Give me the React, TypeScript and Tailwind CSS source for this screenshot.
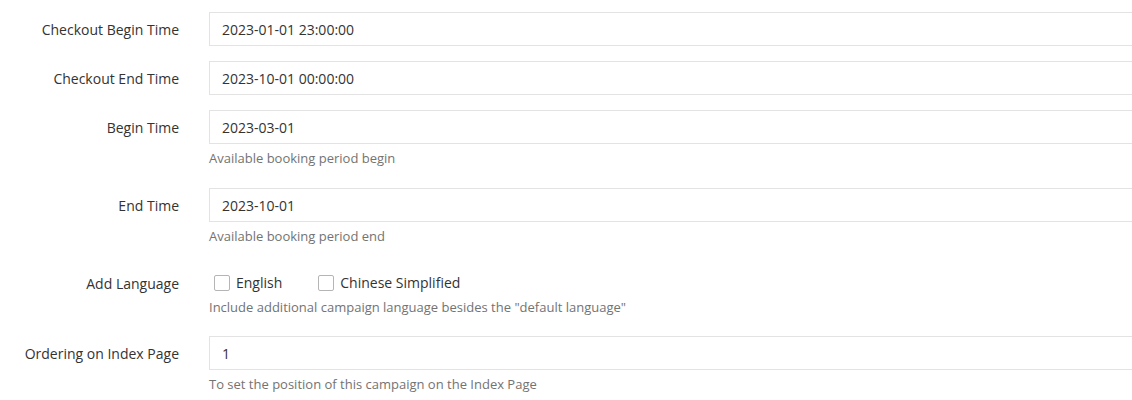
import React from "react";

const font = { fontFamily: '"Open Sans", "Noto Sans", sans-serif' };

function Row({
  label,
  children,
  help,
  mb,
}: {
  label: string;
  children: React.ReactNode;
  help?: string;
  mb?: string;
}) {
  return (
    <div className={`flex ${mb ?? (help ? "mb-[22px]" : "mb-[15px]")}`}>
      <div className="w-[194px] shrink-0 pr-[15px] pt-[8px] text-right text-[14px] leading-[20px] text-[#333333]">
        {label}
      </div>
      <div className="flex-1 pl-[15px]">
        {children}
        {help && (
          <div className="mt-[5px] pt-[1px] text-[13px] leading-[17px] text-[#737373]">{help}</div>
        )}
      </div>
    </div>
  );
}

function Input({ value }: { value: string }) {
  return (
    <div className="h-[34px] w-full border border-[#e3e3e3] bg-white px-[12px] pt-[1px] text-[14px] leading-[31px] text-[#333333]">
      {value}
    </div>
  );
}

function Check({ label, className }: { label: string; className?: string }) {
  return (
    <label className={`flex items-center ${className ?? ""}`}>
      <span className="inline-block h-[16px] w-[16px] rounded-[2px] border border-[#b5b5b5] bg-white" />
      <span className="ml-[6px] text-[14px] leading-[20px] text-[#333333]">{label}</span>
    </label>
  );
}

export default function App() {
  return (
    <div className="w-[1132px] h-[400px] overflow-hidden bg-white" style={font}>
      <div className="w-[1160px] pt-[12px]">
        <Row label="Checkout Begin Time">
          <Input value="2023-01-01 23:00:00" />
        </Row>
        <Row label="Checkout End Time">
          <Input value="2023-10-01 00:00:00" />
        </Row>
        <Row label="Begin Time" help="Available booking period begin" mb="mb-[21px]">
          <Input value="2023-03-01" />
        </Row>
        <Row label="End Time" help="Available booking period end" mb="mb-[21px]">
          <Input value="2023-10-01" />
        </Row>
        <Row
          label="Add Language"
          mb="mb-[20px]"
          help={'Include additional campaign language besides the "default language"'}
        >
          <div className="flex pt-[7px]">
            <Check label="English" className="ml-[5px]" />
            <Check label="Chinese Simplified" className="ml-[36px]" />
          </div>
        </Row>
        <Row label="Ordering on Index Page" help="To set the position of this campaign on the Index Page">
          <Input value="1" />
        </Row>
      </div>
    </div>
  );
}
